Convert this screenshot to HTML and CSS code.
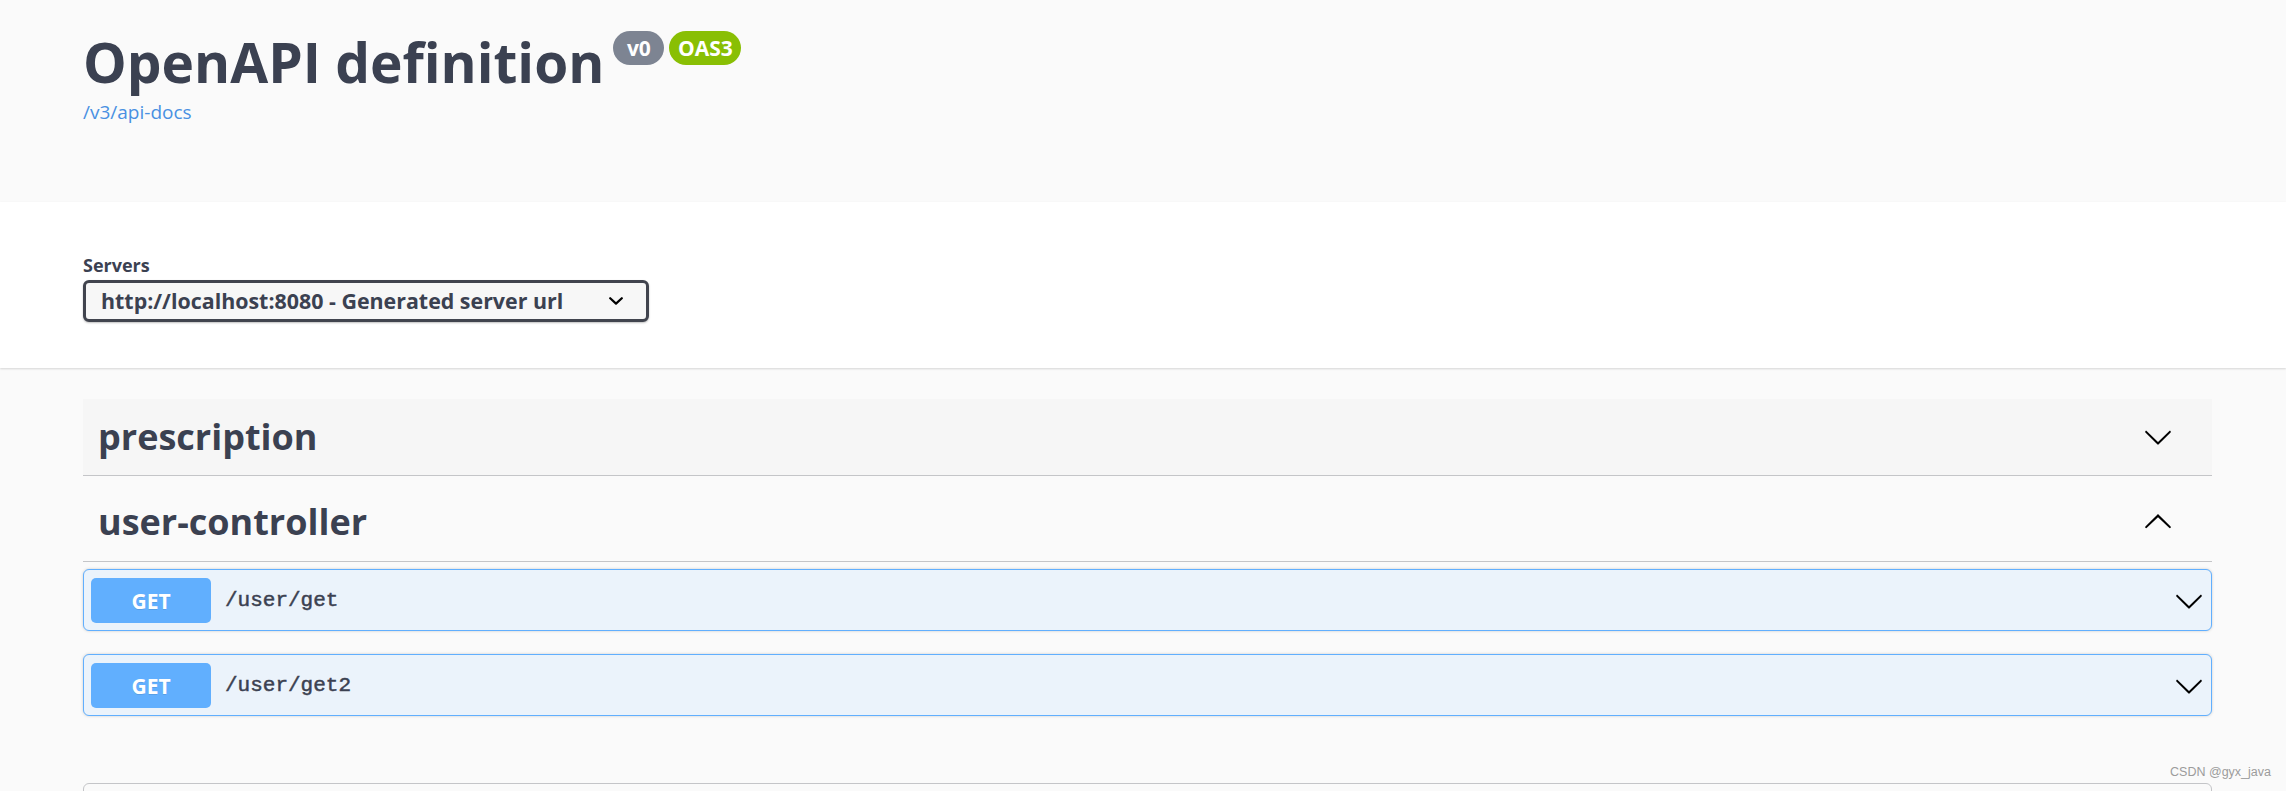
FILE: index.html
```html
<!DOCTYPE html>
<html lang="en">
<head>
<meta charset="utf-8">
<title>Swagger UI</title>
<link rel="stylesheet" href="styles.css">
</head>
<body>
<div class="page">
  <section class="info">
    <div class="wrapper">
      <div class="title-row">
        <h2 class="title">OpenAPI definition</h2>
        <span class="badge badge-version">v0</span>
        <span class="badge badge-oas">OAS3</span>
      </div>
      <a class="spec-link" href="#">/v3/api-docs</a>
    </div>
  </section>

  <section class="schemes">
    <div class="wrapper">
      <div class="servers-label">Servers</div>
      <div class="server-select">
        <span class="server-text">http://localhost:8080 - Generated server url</span>
        <svg class="select-arrow" width="14" height="8" viewBox="0 0 14 8"><path d="M1.2 1.2 L7 6.6 L12.8 1.2" fill="none" stroke="#000" stroke-width="2.2" stroke-linecap="round" stroke-linejoin="round"/></svg>
      </div>
    </div>
  </section>

  <section class="ops">
    <div class="wrapper">
      <div class="tag tag-closed">
        <h3 class="tag-name">prescription</h3>
        <svg class="arrow" width="30" height="30" viewBox="0 0 20 20"><path d="M17.418 6.109c.272-.268.709-.268.979 0s.271.701 0 .969l-7.908 7.83c-.27.268-.707.268-.979 0l-7.908-7.83c-.27-.268-.27-.701 0-.969.271-.268.709-.268.979 0L10 13.25l7.418-7.141z"/></svg>
      </div>
      <div class="tag">
        <h3 class="tag-name">user-controller</h3>
        <svg class="arrow arrow-up" width="30" height="30" viewBox="0 0 20 20"><path d="M17.418 6.109c.272-.268.709-.268.979 0s.271.701 0 .969l-7.908 7.83c-.27.268-.707.268-.979 0l-7.908-7.83c-.27-.268-.27-.701 0-.969.271-.268.709-.268.979 0L10 13.25l7.418-7.141z"/></svg>
      </div>

      <div class="opblock">
        <span class="method">GET</span>
        <span class="path">/user/get</span>
        <svg class="arrow" width="30" height="30" viewBox="0 0 20 20"><path d="M17.418 6.109c.272-.268.709-.268.979 0s.271.701 0 .969l-7.908 7.83c-.27.268-.707.268-.979 0l-7.908-7.83c-.27-.268-.27-.701 0-.969.271-.268.709-.268.979 0L10 13.25l7.418-7.141z"/></svg>
      </div>
      <div class="opblock">
        <span class="method">GET</span>
        <span class="path">/user/get2</span>
        <svg class="arrow" width="30" height="30" viewBox="0 0 20 20"><path d="M17.418 6.109c.272-.268.709-.268.979 0s.271.701 0 .969l-7.908 7.83c-.27.268-.707.268-.979 0l-7.908-7.83c-.27-.268-.27-.701 0-.969.271-.268.709-.268.979 0L10 13.25l7.418-7.141z"/></svg>
      </div>

      <div class="models"></div>
    </div>
  </section>

  <div class="watermark">CSDN @gyx_java</div>
</div>
</body>
</html>
```

FILE: styles.css
```css
html, body {
  margin: 0;
  padding: 0;
  height: 791px;
  overflow: hidden;
  background: #fafafa;
}

.page {
  position: relative;
  height: 791px;
  overflow: hidden;
  font-family: "Open Sans", "Noto Sans", sans-serif;
  color: #3b4151;
}

.wrapper {
  margin-left: 83px;
  width: 2129px;
}

/* ---------- info header ---------- */
.info {
  box-sizing: border-box;
  height: 202px;
  padding-top: 35px;
  background: #fafafa;
}

.title-row {
  display: flex;
  align-items: flex-start;
}

.title {
  margin: 0;
  font-size: 55px;
  line-height: 54px;
  font-weight: 700;
  color: #3b4151;
}

.badge {
  box-sizing: border-box;
  height: 34px;
  margin-top: -4px;
  border-radius: 17px;
  display: flex;
  align-items: center;
  justify-content: center;
  color: #fff;
  font-size: 21px;
  font-weight: 700;
  line-height: 1;
}

.badge-version {
  width: 51px;
  margin-left: 9px;
  background: #7d8492;
}

.badge-oas {
  width: 72px;
  margin-left: 5px;
  background: #89bf04;
}

.spec-link {
  display: block;
  margin-top: 14px;
  font-size: 19px;
  line-height: 19px;
  color: #4990e2;
  text-decoration: none;
}

/* ---------- servers ---------- */
.schemes {
  box-sizing: border-box;
  height: 166px;
  padding-top: 54px;
  background: #fff;
  box-shadow: 0 1px 2px 0 rgba(0, 0, 0, 0.15);
  position: relative;
}

.servers-label {
  font-size: 18px;
  line-height: 18px;
  font-weight: 700;
}

.server-select {
  box-sizing: border-box;
  margin-top: 6px;
  width: 566px;
  height: 42px;
  padding: 0 23px 0 15px;
  border: 3px solid #41444e;
  border-radius: 6px;
  background: #f7f7f7;
  box-shadow: 0 1px 2px 0 rgba(0, 0, 0, 0.25);
  display: flex;
  align-items: center;
  justify-content: space-between;
}

.server-text {
  font-size: 21.4px;
  font-weight: 700;
  line-height: 1;
  color: #3b4151;
}

.select-arrow {
  display: block;
}

/* ---------- operations ---------- */
.ops {
  padding-top: 31px;
}

.tag {
  box-sizing: border-box;
  height: 77px;
  margin-bottom: 7px;
  padding: 0 39px 0 15px;
  border-bottom: 1px solid #c4c5c8;
  display: flex;
  align-items: center;
  justify-content: space-between;
}

.tag + .tag {
  height: 79px;
}

.tag-closed {
  background: #f6f6f6;
}

.tag-name {
  margin: 0;
  font-size: 36px;
  line-height: 1;
  font-weight: 700;
  color: #3b4151;
}

.arrow {
  display: block;
  flex: none;
  fill: #000;
}

.arrow-up {
  transform: rotate(180deg);
}

.opblock {
  box-sizing: border-box;
  height: 62px;
  margin-bottom: 23px;
  padding: 1px 7px 0 7px;
  border: 1px solid #61affe;
  border-radius: 6px;
  background: #ebf3fb;
  box-shadow: 0 0 3px rgba(0, 0, 0, 0.19);
  display: flex;
  align-items: center;
}

.method {
  flex: none;
  width: 120px;
  height: 45px;
  border-radius: 5px;
  background: #61affe;
  color: #fff;
  font-size: 21px;
  font-weight: 700;
  text-shadow: 0 1px 0 rgba(0, 0, 0, 0.1);
  display: flex;
  align-items: center;
  justify-content: center;
}

.path {
  flex: 1;
  margin-left: 14px;
  font-family: "Liberation Mono", "DejaVu Sans Mono", monospace;
  font-size: 21px;
  font-weight: 400;
  -webkit-text-stroke: 0.5px #3b4151;
  color: #3b4151;
}

.models {
  margin-top: 67px;
  height: 200px;
  border: 1px solid #c4c5c8;
  border-radius: 6px;
}

.watermark {
  position: absolute;
  right: 15px;
  top: 765px;
  font-family: "Liberation Sans", Arial, sans-serif;
  font-size: 12.5px;
  color: #9c9c9c;
}
```
